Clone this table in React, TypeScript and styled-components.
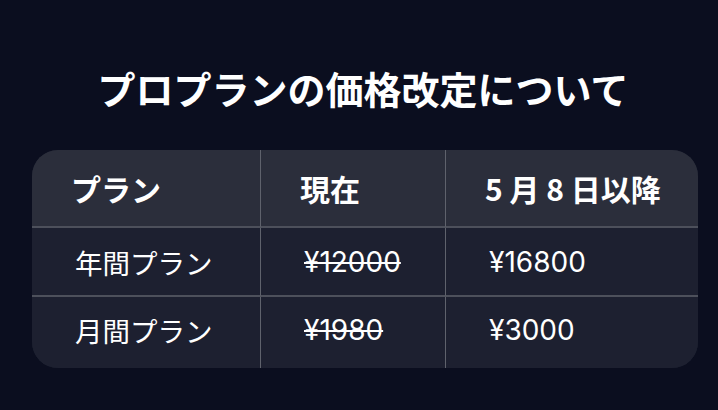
import React from "react";
import styled, { createGlobalStyle } from "styled-components";

const GlobalStyle = createGlobalStyle`
  html, body { margin: 0; padding: 0; background: #0b0e1f; }
  body { font-family: "Noto Sans CJK JP", "Noto Sans", sans-serif; color: #ffffff; }
`;

const Page = styled.div`
  width: 718px;
  height: 410px;
  box-sizing: border-box;
  padding: 64px 20px 0 32px;
  display: flex;
  flex-direction: column;
  align-items: stretch;
  background: #0b0e1f;
`;

const Title = styled.h1`
  margin: 0 0 38px 0;
  width: 666px;
  font-size: 38px;
  line-height: 48px;
  font-weight: 700;
  text-align: center;
  letter-spacing: 0;
  padding-right: 4px;
  box-sizing: border-box;
`;

const Table = styled.div`
  display: grid;
  grid-template-columns: 229px 185px 1fr;
  grid-template-rows: 78px 69px 71px;
  width: 666px;
  border-radius: 26px;
  overflow: hidden;
  background: #1d2030;
`;

const Cell = styled.div<{ $head?: boolean; $last?: boolean; $bottom?: boolean }>`
  display: flex;
  align-items: center;
  padding-left: ${(p) => (p.$head ? "39px" : "43px")};
  padding-bottom: ${(p) => (p.$bottom ? "6px" : "0")};
  background: ${(p) => (p.$head ? "#2b2e3b" : "#1d2030")};
  border-right: ${(p) => (p.$last ? "none" : "1px solid #5f626c")};
  border-bottom: ${(p) => (p.$bottom ? "none" : "2px solid #4d505b")};
  font-size: ${(p) => (p.$head ? "30px" : "27.5px")};
  font-weight: ${(p) => (p.$head ? 700 : 400)};
  white-space: nowrap;
`;

const Price = styled.span<{ $old?: boolean }>`
  font-family: Inter, "Noto Sans", sans-serif;
  font-size: 28px;
  text-decoration: ${(p) => (p.$old ? "line-through" : "none")};
  text-decoration-thickness: 2px;
`;

const rows = [
  { plan: "年間プラン", now: "¥12000", next: "¥16800" },
  { plan: "月間プラン", now: "¥1980", next: "¥3000" },
];

export default function App() {
  return (
    <>
      <GlobalStyle />
      <Page>
        <Title>プロプランの価格改定について</Title>
        <Table>
          <Cell $head>プラン</Cell>
          <Cell $head>現在</Cell>
          <Cell $head $last>5 月 8 日以降</Cell>
          {rows.map((r, i) => (
            <React.Fragment key={r.plan}>
              <Cell $bottom={i === rows.length - 1}>{r.plan}</Cell>
              <Cell $bottom={i === rows.length - 1}>
                <Price $old>{r.now}</Price>
              </Cell>
              <Cell $bottom={i === rows.length - 1} $last>
                <Price>{r.next}</Price>
              </Cell>
            </React.Fragment>
          ))}
        </Table>
      </Page>
    </>
  );
}
